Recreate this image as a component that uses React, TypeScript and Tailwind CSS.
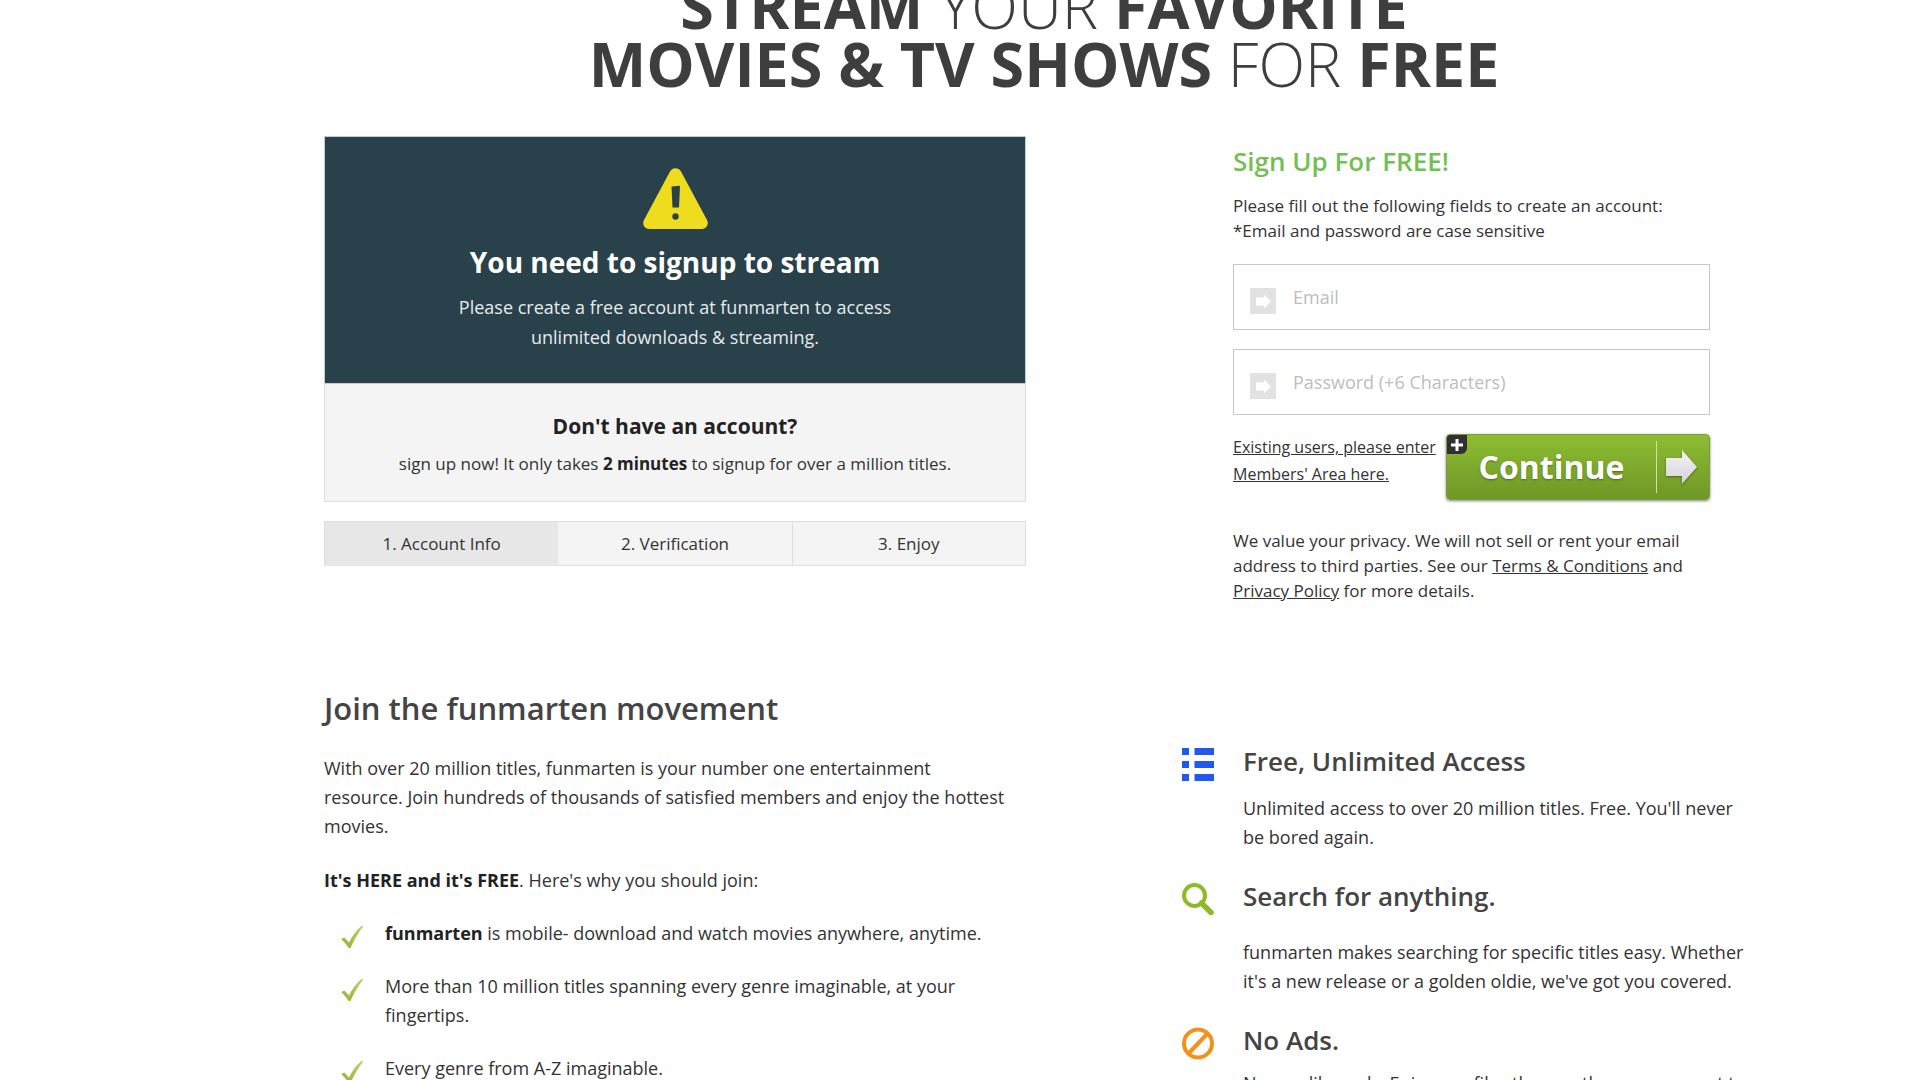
import React from "react";

const steps = [
  { label: "1. Account Info", style: "bg-[#e7e7e7]" },
  { label: "2. Verification", style: "" },
  { label: "3. Enjoy", style: "border-l border-[#dedede]" },
];

function WarningIcon() {
  return (
    <svg className="mx-auto h-[61px] w-[65px]" viewBox="0 0 65 61" aria-hidden="true">
      <path
        d="M27 3.5C29.4-1 35.6-1 38 3.5L64 52c2.2 4.200-.500 9-5 9H6c-4.500 0-7.200-4.800-5-9z"
        fill="#f0dc1e"
      />
      <path d="M28.500 18.500L37 17.800 36 39.500h-6.500z" fill="#29414a" />
      <circle cx="32.500" cy="48.500" r="3.200" fill="#29414a" />
    </svg>
  );
}

function FieldIcon() {
  return (
    <svg className="mt-1 h-[26px] w-[26px] shrink-0" viewBox="0 0 26 26" aria-hidden="true">
      <rect width="26" height="26" fill="#e2e2e2" />
      <path d="M6 9.500h8V6.500L21 13.500l-7 7v-3H6z" fill="#fff" />
    </svg>
  );
}

function CheckIcon() {
  return (
    <svg className="mt-[7px] ml-[17px] h-[22px] w-[22px] shrink-0" viewBox="0 0 22 22" aria-hidden="true">
      <defs>
        <linearGradient id="tick" x1="0" y1="1" x2="0.800" y2="0">
          <stop offset="0" stopColor="#94b62c" />
          <stop offset="1" stopColor="#b5cf6c" />
        </linearGradient>
      </defs>
      <path d="M0 13L3.500 11.500 8 16.500C11.500 9.500 15.500 4 20.500 0H22.500C17.500 6.500 13 13.500 9.500 22H7.500C5.500 18.500 3 15.500 0 13z" fill="url(#tick)" />
    </svg>
  );
}

function ListIcon() {
  return (
    <svg className="h-[33px] w-8" viewBox="0 0 32 33" fill="#2159ec" aria-hidden="true">
      <path d="M0 0h7v7H0zM12.500 0H32v7H12.500zM0 13h7v7H0zM12.500 13H32v7H12.500zM0 26h7v7H0zM12.500 26H32v7H12.500z" />
    </svg>
  );
}

function SearchIcon() {
  return (
    <svg className="h-8 w-8" viewBox="0 0 32 32" fill="none" stroke="#8dbb25" aria-hidden="true">
      <circle cx="12.500" cy="12.500" r="10.500" strokeWidth="4" />
      <path d="M19.500 20L29 29.500" strokeWidth="5.500" strokeLinecap="round" />
    </svg>
  );
}

function NoAdsIcon() {
  return (
    <svg className="h-[33px] w-8" viewBox="0 0 32 33" fill="none" stroke="#f2921c" strokeWidth="4" aria-hidden="true">
      <circle cx="16" cy="16.500" r="14" />
      <path d="M6.500 26.500L25.500 6.500" />
    </svg>
  );
}

const features = [
  {
    icon: <ListIcon />,
    title: "Free, Unlimited Access",
    text: "Unlimited access to over 20 million titles. Free. You'll never be bored again.",
    gap: "mt-[17px]",
  },
  {
    icon: <SearchIcon />,
    title: "Search for anything.",
    text: "funmarten makes searching for specific titles easy. Whether it's a new release or a golden oldie, we've got you covered.",
    gap: "mt-[26px]",
  },
  {
    icon: <NoAdsIcon />,
    title: "No Ads.",
    text: "No one likes ads. Enjoy our files the way they were meant to be.",
    gap: "mt-[13px]",
  },
];

interface FieldProps {
  id: string;
  type: string;
  placeholder: string;
}

function Field({ id, type, placeholder }: FieldProps) {
  return (
    <div className="flex h-[66px] items-center border border-[#c8c8c8] bg-white px-4">
      <label htmlFor={id} aria-label={placeholder} className="pt-1">
        <FieldIcon />
      </label>
      <input
        id={id}
        type={type}
        placeholder={placeholder}
        className="ml-[17px] h-full min-w-0 flex-1 bg-transparent text-[18px] outline-none placeholder:text-[#bdbdbd]"
      />
    </div>
  );
}

function SignupForm() {
  return (
    <form className="w-[477px] pt-[9px]" onSubmit={(e) => e.preventDefault()}>
      <h2 className="text-[26px] leading-8 font-semibold text-[#74bf54]">Sign Up For FREE!</h2>
      <p className="mt-4 mb-[21px] text-[17px] leading-[25px]">
        Please fill out the following fields to create an account:
        <br />
        *Email and password are case sensitive
      </p>

      <div className="flex flex-col gap-[19px]">
        <Field id="email" type="email" placeholder="Email" />
        <Field id="password" type="password" placeholder="Password (+6 Characters)" />
      </div>

      <div className="mt-[19px] flex justify-between">
        <a href="#" className="text-[16px] leading-[27px] whitespace-nowrap underline">
          Existing users, please enter
          <br />
          Members' Area here.
        </a>
        <button
          type="submit"
          className="relative flex h-[66px] w-[264px] shrink-0 items-center rounded-[4px] border border-[#7c9a3e] bg-linear-to-b from-[#8ebd33] to-[#6f9726] text-white shadow-[0_1px_3px_rgba(0,0,0,0.5)]"
        >
          <span className="absolute top-0 left-0 flex h-[19px] w-[20px] items-center justify-center rounded-tl-[3px] rounded-br-[6px] bg-[#303030]">
            <svg className="h-3 w-3" viewBox="0 0 12 12" fill="#fff" aria-hidden="true">
              <path d="M4.500 0h3v4.500H12v3H7.500V12h-3V7.500H0v-3h4.500z" />
            </svg>
          </span>
          <span className="flex-1 text-center text-[32px] font-bold [text-shadow:0_1px_2px_rgba(0,0,0,0.35)]">Continue</span>
          <span className="flex h-[52px] w-[53px] items-center border-l border-[#cfe3a4] pl-[9px]">
            <svg className="h-9 w-8 drop-shadow-[0_1px_1px_rgba(0,0,0,0.4)]" viewBox="0 0 32 36" aria-hidden="true">
              <defs>
                <linearGradient id="arrow" x1="0" y1="0" x2="0" y2="1">
                  <stop offset="0" stopColor="#f4f4f8" />
                  <stop offset="1" stopColor="#d2d2d8" />
                </linearGradient>
              </defs>
              <path d="M0 9h16V1l15 17-15 17v-8H0z" fill="url(#arrow)" />
            </svg>
          </span>
        </button>
      </div>

      <p className="mt-7 text-[17px] leading-[25px]">
        We value your privacy. We will not sell or rent your email address to third parties. See our{" "}
        <a href="#" className="underline">Terms &amp; Conditions</a> and{" "}
        <a href="#" className="underline">Privacy Policy</a> for more details.
      </p>
    </form>
  );
}

export default function App() {
  return (
    <div className="overflow-hidden bg-white pr-[156px] pb-12 pl-[324px] font-['Open_Sans',sans-serif] text-[#333]">
      <h1 className="-mt-[23px] text-center text-[61px] leading-[58px] font-light text-[#3e3e3e] uppercase">
        <strong className="font-bold">Stream</strong> your <strong className="font-bold">favorite</strong>
        <br />
        <strong className="font-bold">Movies &amp; TV shows</strong> for <strong className="font-bold">free</strong>
      </h1>

      <div className="mt-[43px] flex items-start justify-between">
        <section className="w-[702px] text-center">
          <div className="border border-[#c3cdd1] bg-[#29414a] py-[31px] text-white">
            <WarningIcon />
            <h2 className="mt-[17px] text-[28px] leading-8 font-bold">You need to signup to stream</h2>
            <p className="mt-[14px] text-[18px] leading-[30px] text-[#e6ebed]">
              Please create a free account at funmarten to access
              <br />
              unlimited downloads &amp; streaming.
            </p>
          </div>
          <div className="border border-t-0 border-[#dedede] bg-[#f4f4f4] pt-7 pb-[23px]">
            <h3 className="text-[21px] leading-7 font-bold text-[#222]">Don't have an account?</h3>
            <p className="mt-[10px] text-[17px] leading-7">
              sign up now! It only takes <strong className="font-bold text-[#222]">2 minutes</strong> to signup for over a million titles.
            </p>
          </div>
          <ol className="mt-[19px] grid h-[45px] grid-cols-3 border border-[#dedede] bg-[#f4f4f4] text-[17px] leading-[44px]">
            {steps.map((step) => (
              <li key={step.label} className={step.style}>
                {step.label}
              </li>
            ))}
          </ol>
        </section>

        <div className="mr-[54px]">
          <SignupForm />
        </div>
      </div>

      <div className="mt-[85px] flex items-start justify-between">
        <section className="w-[702px] text-[18px] leading-[29px]">
          <h2 className="text-[31px] leading-10 font-semibold text-[#444]">Join the funmarten movement</h2>
          <p className="mt-[26px]">
            With over 20 million titles, funmarten is your number one entertainment
            <br />
            resource. Join hundreds of thousands of satisfied members and enjoy the hottest movies.
          </p>
          <p className="mt-[25px]">
            <strong className="font-bold text-[#222]">It's HERE and it's FREE</strong>. Here's why you should join:
          </p>
          <ul className="mt-6 flex flex-col gap-6">
            <li className="flex gap-[22px]">
              <CheckIcon />
              <span>
                <strong className="font-bold text-[#222]">funmarten</strong> is mobile- download and watch movies anywhere, anytime.
              </span>
            </li>
            <li className="flex gap-[22px]">
              <CheckIcon />
              <span>
                More than 10 million titles spanning every genre imaginable, at your
                <br />
                fingertips.
              </span>
            </li>
            <li className="flex gap-[22px]">
              <CheckIcon />
              <span>Every genre from A-Z imaginable.</span>
            </li>
          </ul>
        </section>

        <section className="flex w-[582px] flex-col gap-7 pt-[57px]">
          {features.map((feature) => (
            <div key={feature.title} className="flex gap-[29px]">
              <div className="w-8 shrink-0 pt-[3px]">{feature.icon}</div>
              <div className="max-w-[510px]">
                <h3 className="text-[26px] leading-8 font-semibold text-[#444]">{feature.title}</h3>
                <p className={`text-[18px] leading-[29px] ${feature.gap}`}>{feature.text}</p>
              </div>
            </div>
          ))}
        </section>
      </div>
    </div>
  );
}
